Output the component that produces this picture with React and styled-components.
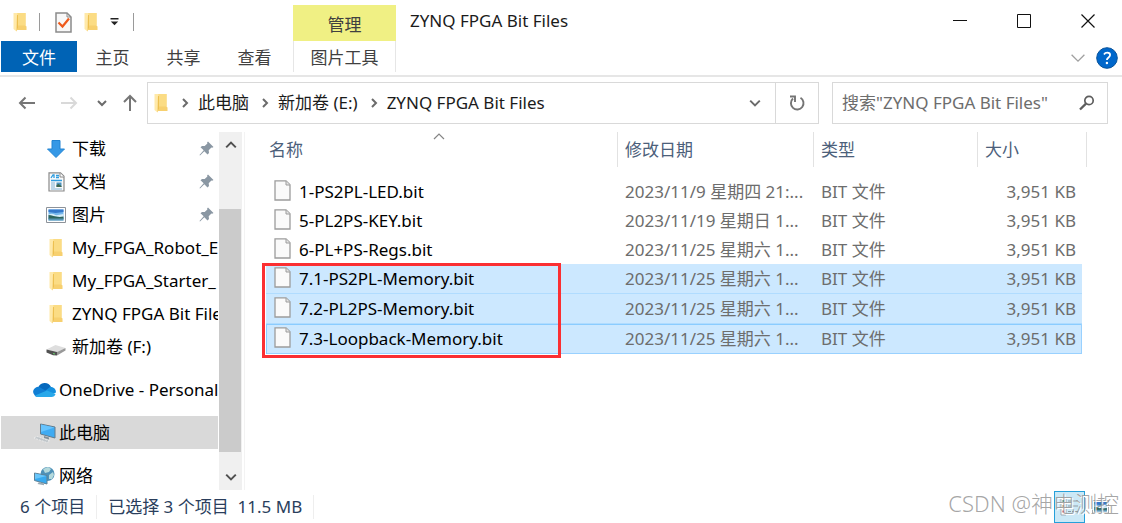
import React from 'react';
import styled, { createGlobalStyle, css } from 'styled-components';

const GlobalStyle = createGlobalStyle`
  * {
    box-sizing: border-box;
  }

  body {
    margin: 0;
    background: #ffffff;
    color: #1b1b1b;
    font: 17px/24px "Noto Sans", "Noto Sans CJK SC", sans-serif;
  }

  button,
  input {
    margin: 0;
    padding: 0;
    border: 0;
    background: none;
    color: inherit;
    font: inherit;
  }

  svg {
    display: block;
    flex: none;
  }
`;

const Window = styled.div`
  position: relative;
  display: flex;
  flex-direction: column;
  height: 100vh;
  overflow: hidden;
`;

/* ---------- title bar and ribbon tabs ---------- */

const Header = styled.header`
  display: flex;
  height: 77px;
  padding: 0 2px 0 1px;
  border-bottom: 2px solid #e6e6e6;
`;

const HeaderSide = styled.div`
  display: flex;
  flex-direction: column;
  width: 292px;
`;

const QuickAccess = styled.div`
  display: flex;
  align-items: center;
  height: 41px;
  padding: 3px 0 0 12px;
`;

const QuickButton = styled.button`
  display: flex;
  margin-right: ${({ $gap }) => $gap || 12}px;
`;

const Divider = styled.span`
  width: 1px;
  height: 18px;
  margin-right: 15px;
  background: #9a9a9a;
`;

const Tabs = styled.nav`
  display: flex;
`;

const Tab = styled.button`
  width: ${({ $active }) => ($active ? 76 : 71)}px;
  height: 31px;
  padding-top: 3px;
  background: ${({ $active }) => ($active ? '#0063b5' : 'transparent')};
  color: ${({ $active }) => ($active ? '#ffffff' : '#404040')};
`;

const ContextTab = styled.div`
  display: flex;
  flex-direction: column;
  width: 103px;
  padding-top: 5px;
  text-align: center;
`;

const ContextTitle = styled.div`
  height: 36px;
  padding-top: 8px;
  background: #f0f084;
  color: #404040;
`;

const ContextButton = styled.button`
  height: 31px;
  padding-top: 3px;
  border: solid #e6e6e6;
  border-width: 0 1px;
  color: #404040;
`;

const TitleArea = styled.div`
  display: flex;
  flex: 1;
  flex-direction: column;
`;

const TitleRow = styled.div`
  display: flex;
  align-items: center;
  height: 41px;
  padding-left: 14px;
`;

const Title = styled.h1`
  flex: 1;
  margin: 0;
  font-size: 17px;
  font-weight: 400;
`;

const WindowButton = styled.button`
  display: flex;
  align-items: center;
  justify-content: center;
  width: 64px;
  height: 41px;
`;

const RibbonTools = styled.div`
  display: flex;
  align-items: center;
  justify-content: flex-end;
  gap: 10px;
  height: 34px;
  padding-right: 2px;
`;

/* ---------- address row ---------- */

const AddressRow = styled.div`
  display: flex;
  height: 55px;
  padding: 5px 14px 8px 18px;
`;

const NavButtons = styled.div`
  display: flex;
  align-items: center;
  width: 129px;
`;

const AddressBar = styled.div`
  display: flex;
  flex: 1;
  align-items: center;
  border: 1px solid #d9d9d9;
  padding-left: 6px;
`;

const Crumbs = styled.nav`
  display: flex;
  flex: 1;
  align-items: center;
  padding-left: 1px;
`;

const Crumb = styled.button`
  display: flex;
  align-items: center;
  white-space: nowrap;

  svg {
    margin: 0 8px 0 11px;
  }
`;

const BarButton = styled.button`
  display: flex;
  align-items: center;
  justify-content: center;
  width: ${({ $divided }) => ($divided ? 43 : 40)}px;
  height: 100%;
  border-left: ${({ $divided }) => ($divided ? '1px solid #d9d9d9' : '0')};
`;

const SearchBox = styled.form`
  display: flex;
  align-items: center;
  width: 276px;
  margin-left: 13px;
  padding-left: 9px;
  border: 1px solid #d9d9d9;
`;

const SearchInput = styled.input`
  flex: 1;
  min-width: 0;
  outline: 0;

  &::placeholder {
    color: #6d6d6d;
    opacity: 1;
  }
`;

/* ---------- navigation pane ---------- */

const Body = styled.div`
  display: flex;
  flex: 1;
  min-height: 0;
`;

const Sidebar = styled.aside`
  width: 218px;
  padding-left: 1px;
  overflow: hidden;
`;

const NavItem = styled.button`
  display: flex;
  align-items: center;
  gap: ${({ $root }) => ($root ? 3 : 6)}px;
  width: 100%;
  height: 33px;
  margin-top: ${({ $root }) => ($root ? 10 : 0)}px;
  padding-left: ${({ $root }) => ($root ? 32 : 45)}px;
  background: ${({ $current }) => ($current ? '#d9d9d9' : 'transparent')};
  color: #000000;
  text-align: left;
  white-space: nowrap;
`;

const NavIcon = styled.span`
  display: flex;
  justify-content: center;
  width: ${({ $root }) => ($root ? 23 : 20)}px;
`;

const NavLabel = styled.span`
  flex: 1;
  min-width: 0;
  overflow: hidden;
`;

const Pin = styled.svg`
  margin-right: 4px;
`;

const Scrollbar = styled.div`
  display: flex;
  flex-direction: column;
  width: 23px;
  margin-left: 1px;
  background: #f0f0f0;
`;

const ScrollButton = styled.button`
  display: flex;
  align-items: center;
  justify-content: center;
  height: 26px;
`;

const ScrollSpace = styled.div`
  flex: ${({ $size }) => $size};
`;

const Thumb = styled.div`
  flex: 243;
  margin-right: 1px;
  background: #cbcbcb;
`;

/* ---------- file list ---------- */

const Main = styled.main`
  position: relative;
  flex: 1;
  min-width: 0;
  margin-left: 2px;
  padding: 0 35px 0 21px;
  border-left: 1px solid #f3f3f3;
`;

const SortMark = styled.svg`
  position: absolute;
  top: 1px;
  left: 188px;
`;

const FileTable = styled.table`
  width: 100%;
  border-collapse: separate;
  border-spacing: 0;
  table-layout: fixed;
`;

const HeadCell = styled.th`
  width: ${({ $width }) => ($width ? `${$width}px` : 'auto')};
  height: 35px;
  padding: 0 0 0 ${({ $first }) => ($first ? 3 : 7)}px;
  border-right: ${({ $line = true }) => ($line ? '1px solid #e2e2e2' : '0')};
  color: #4c607a;
  font-weight: 400;
  text-align: left;
`;

const Cell = styled.td`
  height: 29px;
  padding: 0 6px 0 7px;
  overflow: hidden;
  color: #6d6d6d;
  text-align: ${({ $right }) => ($right ? 'right' : 'left')};
  text-overflow: ellipsis;
  white-space: nowrap;
`;

const NameCell = styled(Cell)`
  padding-left: 8px;
  color: #000000;
`;

const FileName = styled.span`
  display: flex;
  align-items: center;
  gap: 8px;

  svg {
    margin-bottom: 3px;
  }
`;

const FileRow = styled.tr`
  ${({ $selected }) =>
    $selected &&
    css`
      ${Cell}:not(:last-child) {
        height: 30px;
        background: #cce8ff;
        box-shadow: inset 0 -1px #b0dcff;
      }
    `}

  ${({ $focused }) =>
    $focused &&
    css`
      ${Cell}:not(:last-child) {
        box-shadow: inset 0 1px #8accff, inset 0 -1px #99d1ff;
      }
      ${Cell}:first-child {
        box-shadow: inset 1px 1px #8accff, inset 0 -1px #99d1ff;
      }
      ${Cell}:nth-last-child(2) {
        box-shadow: inset -1px -1px #99d1ff, inset 0 1px #8accff;
      }
    `}
`;

const Spacer = styled.tr`
  height: 10px;
`;

const Highlight = styled.div`
  position: absolute;
  top: 131px;
  left: 17px;
  width: 299px;
  height: 95px;
  border: 3px solid #fb2f32;
  pointer-events: none;
`;

/* ---------- status bar ---------- */

const StatusBar = styled.footer`
  display: flex;
  align-items: center;
  height: 33px;
  padding: 0 6px 0 20px;
  color: #2a3e5c;
`;

const StatusText = styled.span`
  margin-right: 11px;
  padding-right: 11px;
  border-right: 1px solid #eeeeee;
`;

const ViewButtons = styled.div`
  display: flex;
  margin-left: auto;
`;

const ViewButton = styled.button`
  display: flex;
  align-items: center;
  justify-content: center;
  width: 31px;
  height: 32px;
  border: 1px solid ${({ $active }) => ($active ? '#26a0da' : 'transparent')};
  background: ${({ $active }) => ($active ? '#cbe8f6' : 'transparent')};
`;

const Watermark = styled.div`
  position: absolute;
  right: 3px;
  bottom: 6px;
  color: rgba(150, 150, 150, 0.85);
  font-size: 22px;
  font-weight: 300;
  line-height: 28px;
  text-shadow: 1px 1px #ffffff;
  white-space: nowrap;
  pointer-events: none;
`;

/* ---------- icons ---------- */

const FolderIcon = () => (
  <svg width="14" height="20" viewBox="0 0 14 20">
    <path d="M4 1h8.500v12.500l1 1V18H4z" fill="#f7d06f" />
    <path d="M4 1h8.500v12.500H4z" fill="#fbdc84" />
    <path d="M.5 1H4l1 2v13l-1.500 3.500L.5 17z" fill="#ffe9a9" />
    <path d="M4 2.500l1 .8V16l-1.500 3.500z" fill="#edc050" />
  </svg>
);

const CheckDocIcon = () => (
  <svg width="17" height="21" viewBox="0 0 17 21" fill="none">
    <path d="M1 1h11l4 4v15H1z" fill="#f8f8f8" stroke="#8b8b8b" strokeWidth="1.500" />
    <path d="M12 1v4h4" stroke="#8b8b8b" />
    <path d="M3.500 10.500l4 4 6.500-8" stroke="#ee5a1c" strokeWidth="2.200" />
  </svg>
);

const CustomizeIcon = () => (
  <svg width="9" height="8" viewBox="0 0 9 8">
    <path d="M.5 0h8v1.500h-8zM.8 3.500h7.400L4.500 7.300z" fill="#222" />
  </svg>
);

const Chevron = ({ dir = 'down', size = 10, color = '#6b6b6b', weight = 2 }) => {
  const paths = {
    down: 'M1 3l4 4 4-4',
    up: 'M1 7l4-4 4 4',
    right: 'M3 1l4 4-4 4',
  };
  return (
    <svg width={size} height={size} viewBox="0 0 10 10" fill="none">
      <path d={paths[dir]} stroke={color} strokeWidth={(weight * 10) / size} />
    </svg>
  );
};

const Arrow = ({ dir, color = '#767676' }) => {
  const paths = {
    left: 'M17 9H2M7.500 3.500L2 9l5.500 5.500',
    right: 'M1 9h15M10.500 3.500L16 9l-5.500 5.500',
    up: 'M9 17V2M3 8l6-6 6 6',
  };
  return (
    <svg width="18" height="18" viewBox="0 0 18 18" fill="none">
      <path d={paths[dir]} stroke={color} strokeWidth="2" />
    </svg>
  );
};

const RefreshIcon = () => (
  <svg width="16" height="17" viewBox="0 0 16 17" fill="none">
    <path d="M11.500 2.800a6.300 6.300 0 1 1-7.500.7" stroke="#747474" strokeWidth="1.900" />
    <path d="M1 1.500h5V7" stroke="#747474" strokeWidth="1.900" />
  </svg>
);

const SearchIcon = () => (
  <svg width="16" height="16" viewBox="0 0 16 16" fill="none">
    <circle cx="10" cy="5.500" r="4.200" stroke="#5d5d5d" strokeWidth="1.700" />
    <path d="M7 8.700L1 14.500" stroke="#5d5d5d" strokeWidth="2.300" />
  </svg>
);

const HelpIcon = () => (
  <svg width="22" height="22" viewBox="0 0 22 22" fill="none">
    <circle cx="11" cy="11" r="10.300" fill="#0067cb" stroke="#07539c" />
    <path
      d="M8 7.500c.8-1.300 2-1.800 3.200-1.800 1.700 0 2.900.9 2.900 2.400 0 2.400-3.200 2.300-3.200 5"
      stroke="#fff"
      strokeWidth="1.800"
    />
    <circle cx="10.900" cy="16" r="1.200" fill="#fff" />
  </svg>
);

const DownloadIcon = () => (
  <svg width="18" height="18" viewBox="0 0 18 18">
    <path d="M5 .5h8V9h4.500L9 17.500.5 9H5z" fill="#3598e6" stroke="#2284d3" />
  </svg>
);

const DocumentIcon = () => (
  <svg width="17" height="20" viewBox="0 0 17 20">
    <path d="M1 .8h11.500L16 4.300V19H1z" fill="#fafafa" stroke="#8a8a8a" strokeWidth="1.200" />
    <path d="M12 1v4h4" fill="#fff" stroke="#8a8a8a" />
    <path d="M3 6l2-3h1v3M8 3.500h3M8 5.500h3M3 8.500h11" fill="none" stroke="#2e9de0" strokeWidth="1.300" />
    <path d="M3 11h4M3 13h4M3 15h4M3 17h11" stroke="#7fb2d6" />
    <path d="M8.500 10.500h5v4.500h-5z" fill="#4d92bd" />
    <path d="M8.500 13l2-1 3 2v1h-5z" fill="#3e664e" />
  </svg>
);

const PictureIcon = ({ width = 20 }) => (
  <svg width={width} height={(width * 16) / 20} viewBox="0 0 20 16">
    <path d="M.5.5h19v15H.5z" fill="#fff" stroke="#8d9299" />
    <path d="M2.500 2.500h15v11h-15z" fill="#74b6ec" />
    <path d="M2.500 2.500h15V5l-8 1-7-1z" fill="#3479cb" />
    <path d="M2.500 7.500c4-2 6 0 8 .8l7-1.300V10h-15z" fill="#d4ecf8" />
    <path d="M2.500 8c4 0 8 3 15 1.500V12h-15z" fill="#2d655c" />
    <path d="M2.500 11.500h15v2h-15z" fill="#5996b3" />
  </svg>
);

const DriveIcon = () => (
  <svg width="20" height="18" viewBox="0 0 20 18">
    <path d="M.5 11.500L9.500 7l10 3-8.500 4z" fill="#dedede" />
    <path d="M.5 11.500L11 14v3.500l-4-.3L.5 14.500z" fill="#515151" />
    <path d="M11 14l8.500-4v2.500l-8.500 5z" fill="#999" />
    <path d="M7 15.500l2 .5" stroke="#69d16c" />
  </svg>
);

const CloudIcon = () => (
  <svg width="23" height="16" viewBox="0 0 23 16">
    <path d="M5 6A7 7 0 0 1 18 5l-4 6-9-3z" fill="#0669bd" />
    <path d="M1.500 13A4.800 4.800 0 0 1 8 6l9 5-5 4H5c-2 0-3-1-3.500-2z" fill="#107ed4" />
    <path d="M12 9l5-4c3.500-.5 6 2 6 5.500L17 13z" fill="#1490df" />
    <path d="M2 13.500L14 8.500l8.500 3.500c-.5 2-2 3-4 3H5c-1.300 0-2.300-.6-3-1.500z" fill="#28a8ea" />
  </svg>
);

const ComputerIcon = () => (
  <svg width="23" height="20" viewBox="0 0 23 20">
    <path d="M7.500 1L22 4v11L7.500 11z" fill="#40abf2" stroke="#637b8c" />
    <path d="M8 1.500L21.500 4.500 8 9z" fill="#66c4ff" />
    <path d="M11 13l5 1.500v2L11 15z" fill="#839099" />
    <path d="M1 15l3-1.500L17 18l-3 1.500z" fill="#bfc5c9" stroke="#f4f4f4" strokeWidth=".7" strokeDasharray="2 1" />
  </svg>
);

const NetworkIcon = () => (
  <svg width="23" height="20" viewBox="0 0 23 20">
    <circle cx="14.500" cy="8" r="7" fill="#4e91b8" />
    <path d="M10 3l5-2 3 2-2 3-4 1zM16 9l4-3 1 3-2 4h-3z" fill="#b4d9dc" />
    <path d="M1.500 7L14 9.500V18L1.500 14.500z" fill="#38a9ee" stroke="#5f8094" />
    <path d="M2 7.500l11.500 2.500L2 13z" fill="#69c6fa" />
    <path d="M6 16l5 1.500v1.800L4.500 18z" fill="#9aabb5" />
  </svg>
);

const PinIcon = () => (
  <Pin width="15" height="15" viewBox="0 0 15 15">
    <path d="M9 .5L14.500 6l-1.300.8-.8-.3-2.700 2.800.3 2.700-1.500 1.500-3.200-3.200L1 14.500l-.5-.5 4.200-4.800L1.500 6.300 3 5l2.700.1 2.700-2.500-.3-1z" fill="#8a97a3" />
  </Pin>
);

const FileIcon = () => (
  <svg width="17" height="21" viewBox="0 0 17 21">
    <path d="M1 .8h11l4 4V20H1z" fill="#fafafa" stroke="#9c9c9c" strokeWidth="1.300" />
    <path d="M12 1v4h4" fill="#e4e4e4" stroke="#9c9c9c" />
  </svg>
);

const DetailsIcon = () => (
  <svg width="19" height="19" viewBox="0 0 19 19">
    <path d="M1 1h5v17H1z" fill="#fff" stroke="#8f9ba4" strokeWidth=".8" />
    <path d="M2.500 4h2" stroke="#568b5d" strokeWidth="2" />
    <path d="M2.500 9h2" stroke="#c29b48" strokeWidth="2" />
    <path d="M2.500 14.500h2" stroke="#c43d33" strokeWidth="2" />
    <path d="M8 4h3m1 0h6M8 9h3m1 0h6M8 14.500h3m1 0h6" stroke="#8f9ba4" />
  </svg>
);

/* ---------- data ---------- */

const places = [
  { label: '下载', icon: DownloadIcon, pinned: true },
  { label: '文档', icon: DocumentIcon, pinned: true },
  { label: '图片', icon: PictureIcon, pinned: true },
  { label: 'My_FPGA_Robot_E', icon: FolderIcon },
  { label: 'My_FPGA_Starter_', icon: FolderIcon },
  { label: 'ZYNQ FPGA Bit Files', icon: FolderIcon },
  { label: '新加卷 (F:)', icon: DriveIcon },
  { label: 'OneDrive - Personal', icon: CloudIcon, root: true },
  { label: '此电脑', icon: ComputerIcon, root: true, current: true },
  { label: '网络', icon: NetworkIcon, root: true },
];

const files = [
  { name: '1-PS2PL-LED.bit', date: '2023/11/9 星期四 21:...' },
  { name: '5-PL2PS-KEY.bit', date: '2023/11/19 星期日 1...' },
  { name: '6-PL+PS-Regs.bit', date: '2023/11/25 星期六 1...' },
  { name: '7.1-PS2PL-Memory.bit', date: '2023/11/25 星期六 1...', selected: true },
  { name: '7.2-PL2PS-Memory.bit', date: '2023/11/25 星期六 1...', selected: true },
  { name: '7.3-Loopback-Memory.bit', date: '2023/11/25 星期六 1...', selected: true, focused: true },
];

const crumbs = ['此电脑', '新加卷 (E:)', 'ZYNQ FPGA Bit Files'];

const TitleBar = () => (
  <Header>
    <HeaderSide>
      <QuickAccess>
        <QuickButton aria-label="窗口"><FolderIcon /></QuickButton>
        <Divider />
        <QuickButton aria-label="属性"><CheckDocIcon /></QuickButton>
        <QuickButton aria-label="新建文件夹"><FolderIcon /></QuickButton>
        <QuickButton aria-label="自定义" $gap={14}><CustomizeIcon /></QuickButton>
        <Divider />
      </QuickAccess>
      <Tabs>
        <Tab $active>文件</Tab>
        <Tab>主页</Tab>
        <Tab>共享</Tab>
        <Tab>查看</Tab>
      </Tabs>
    </HeaderSide>
    <ContextTab>
      <ContextTitle>管理</ContextTitle>
      <ContextButton>图片工具</ContextButton>
    </ContextTab>
    <TitleArea>
      <TitleRow>
        <Title>ZYNQ FPGA Bit Files</Title>
        <WindowButton aria-label="最小化">
          <svg width="14" height="14"><path d="M0 6.500h14" stroke="#111" /></svg>
        </WindowButton>
        <WindowButton aria-label="最大化">
          <svg width="14" height="14"><path d="M.5.5h13v13H.5z" fill="none" stroke="#111" /></svg>
        </WindowButton>
        <WindowButton aria-label="关闭">
          <svg width="14" height="14"><path d="M.5.5l13 13m0-13l-13 13" stroke="#111" strokeWidth="1.200" /></svg>
        </WindowButton>
      </TitleRow>
      <RibbonTools>
        <button aria-label="展开功能区"><Chevron size={16} color="#a0a0a0" weight={1.3} /></button>
        <button aria-label="帮助"><HelpIcon /></button>
      </RibbonTools>
    </TitleArea>
  </Header>
);

const Address = () => (
  <AddressRow>
    <NavButtons>
      <QuickButton aria-label="后退" $gap={24}><Arrow dir="left" /></QuickButton>
      <QuickButton aria-label="前进" $gap={19}><Arrow dir="right" color="#d9d9d9" /></QuickButton>
      <QuickButton aria-label="最近" $gap={14}><Chevron /></QuickButton>
      <QuickButton aria-label="上移"><Arrow dir="up" /></QuickButton>
    </NavButtons>
    <AddressBar>
      <FolderIcon />
      <Crumbs>
        {crumbs.map(crumb => (
          <Crumb key={crumb}>
            <Chevron dir="right" />
            {crumb}
          </Crumb>
        ))}
      </Crumbs>
      <BarButton aria-label="历史记录"><Chevron size={12} /></BarButton>
      <BarButton aria-label="刷新" $divided><RefreshIcon /></BarButton>
    </AddressBar>
    <SearchBox>
      <SearchInput aria-label="搜索" placeholder={'搜索"ZYNQ FPGA Bit Files"'} />
      <BarButton type="button" aria-label="开始搜索"><SearchIcon /></BarButton>
    </SearchBox>
  </AddressRow>
);

const NavigationPane = () => (
  <>
    <Sidebar>
      {places.map(({ label, icon: Icon, pinned, root, current }) => (
        <NavItem key={label} $root={root} $current={current}>
          <NavIcon $root={root}><Icon /></NavIcon>
          <NavLabel>{label}</NavLabel>
          {pinned && <PinIcon />}
        </NavItem>
      ))}
    </Sidebar>
    <Scrollbar>
      <ScrollButton aria-label="向上滚动"><Chevron dir="up" size={12} color="#505050" /></ScrollButton>
      <ScrollSpace $size={51} />
      <Thumb />
      <ScrollSpace $size={12} />
      <ScrollButton aria-label="向下滚动"><Chevron size={12} color="#505050" /></ScrollButton>
    </Scrollbar>
  </>
);

const FileList = () => (
  <Main>
    <SortMark width="12" height="7" viewBox="0 0 12 7">
      <path d="M1 6l5-5 5 5" fill="none" stroke="#858585" strokeWidth="1.200" />
    </SortMark>
    <FileTable>
      <thead>
        <tr>
          <HeadCell $first>名称</HeadCell>
          <HeadCell $width={196}>修改日期</HeadCell>
          <HeadCell $width={164}>类型</HeadCell>
          <HeadCell $width={104} $line={false}>大小</HeadCell>
          <HeadCell $width={5} $first aria-hidden="true" />
        </tr>
      </thead>
      <tbody>
        <Spacer aria-hidden="true" />
        {files.map(({ name, date, selected, focused }) => (
          <FileRow key={name} $selected={selected} $focused={focused}>
            <NameCell>
              <FileName>
                <FileIcon />
                {name}
              </FileName>
            </NameCell>
            <Cell>{date}</Cell>
            <Cell>BIT 文件</Cell>
            <Cell $right>3,951 KB</Cell>
            <Cell aria-hidden="true" />
          </FileRow>
        ))}
      </tbody>
    </FileTable>
    <Highlight />
  </Main>
);

const App = () => (
  <Window>
    <GlobalStyle />
    <TitleBar />
    <Address />
    <Body>
      <NavigationPane />
      <FileList />
    </Body>
    <StatusBar>
      <StatusText>6 个项目</StatusText>
      <StatusText>已选择 3 个项目&nbsp; 11.5 MB</StatusText>
      <ViewButtons>
        <ViewButton aria-label="详细信息" $active><DetailsIcon /></ViewButton>
        <ViewButton aria-label="大缩略图"><PictureIcon width={17} /></ViewButton>
      </ViewButtons>
    </StatusBar>
    <Watermark>CSDN @神电测控</Watermark>
  </Window>
);

export default App;
